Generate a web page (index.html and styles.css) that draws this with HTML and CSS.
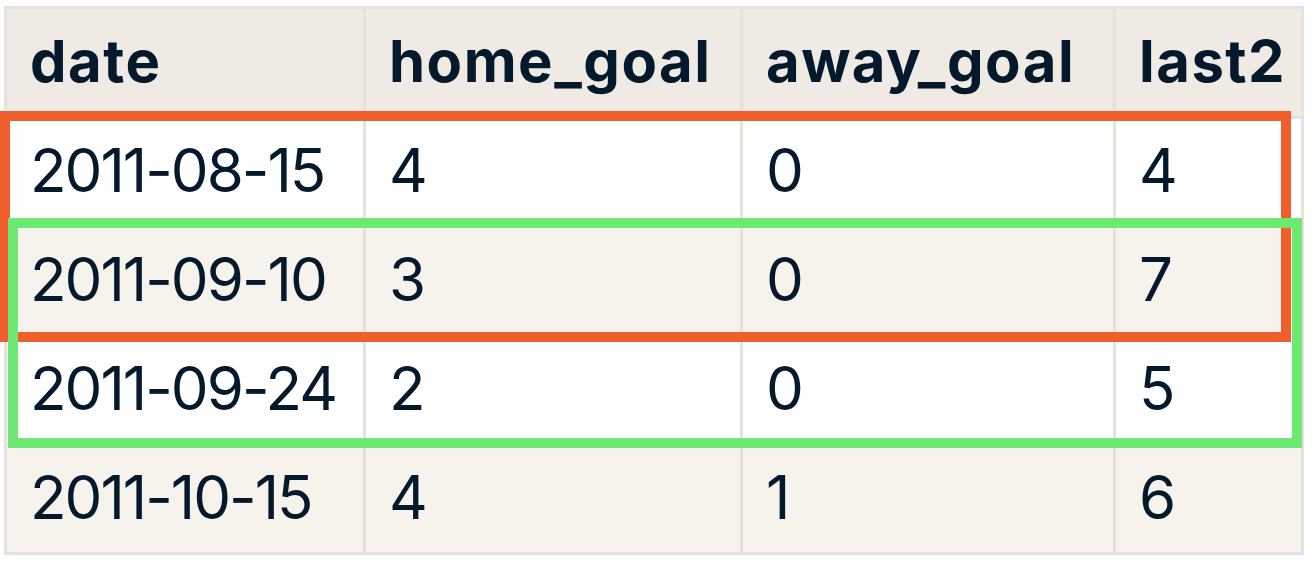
FILE: index.html
```html
<!DOCTYPE html>
<html>
<head>
<meta charset="utf-8">
<link rel="stylesheet" href="styles.css">
</head>
<body>
<div class="stage">
  <table class="data">
    <thead>
      <tr><th class="c1">date</th><th class="c2">home_goal</th><th class="c3">away_goal</th><th class="c4">last2</th></tr>
    </thead>
    <tbody>
      <tr><td>2011-08-15</td><td>4</td><td>0</td><td>4</td></tr>
      <tr class="alt"><td>2011-09-10</td><td>3</td><td>0</td><td>7</td></tr>
      <tr><td>2011-09-24</td><td>2</td><td>0</td><td>5</td></tr>
      <tr class="alt"><td>2011-10-15</td><td>4</td><td>1</td><td>6</td></tr>
    </tbody>
  </table>
  <div class="hl hl-orange"></div>
  <div class="hl hl-green"></div>
</div>
</body>
</html>
```

FILE: styles.css
```css
html, body {
  margin: 0;
  padding: 0;
  background: #ffffff;
}
.stage {
  position: relative;
  width: 1312px;
  height: 564px;
  padding: 6px 0 0 4px;
  box-sizing: border-box;
}
.data {
  width: 1300px;
  border-collapse: separate;
  border-spacing: 0;
  border-top: 3px solid #e6e2db;
  border-left: 3px solid #e6e2db;
  table-layout: fixed;
  color: #05192d;
}
.data th, .data td {
  border-right: 3px solid #e6e2db;
  border-bottom: 3px solid #e6e2db;
  padding: 0 0 0 23px;
  text-align: left;
  vertical-align: middle;
  white-space: nowrap;
  overflow: hidden;
  line-height: 1;
}
.data th {
  height: 104px;
  padding-bottom: 3px;
  background: #efebe4;
  font-family: "Inter", "Lato", sans-serif;
  font-weight: 700;
  font-size: 58px;
  letter-spacing: 1.5px;
}
.data td {
  height: 101px;
  padding-bottom: 5px;
  background: #ffffff;
  font-family: "Inter", "Liberation Sans", sans-serif;
  font-weight: 400;
  font-size: 60px;
  letter-spacing: -2px;
}
.data tr.alt td {
  background: #f6f2ec;
}
.c1 { width: 333px; }
.c2 { width: 351px; }
.c3 { width: 347px; }
.c4 { width: 162px; }
.hl {
  position: absolute;
  box-sizing: border-box;
  border: 10px solid;
}
.hl-orange {
  left: 0;
  top: 111px;
  width: 1291px;
  height: 231px;
  border-color: #ee5f2b;
}
.hl-green {
  left: 8px;
  top: 218px;
  width: 1294px;
  height: 230px;
  border-color: #6ce873;
}
```
